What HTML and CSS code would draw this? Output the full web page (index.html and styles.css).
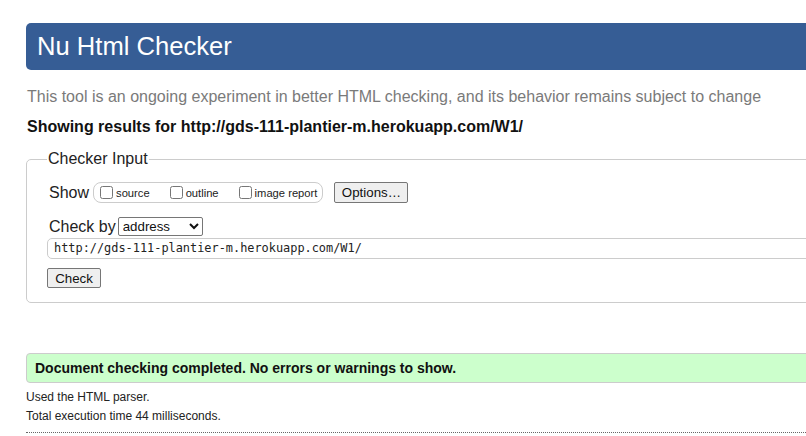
FILE: index.html
```html
<!DOCTYPE html>
<html>
<head>
<meta charset="utf-8">
<link rel="stylesheet" href="styles.css">
</head>
<body>
<div class="page">
  <h1 class="title">Nu Html Checker</h1>
  <p class="intro">This tool is an ongoing experiment in better HTML checking, and its behavior remains subject to change</p>
  <p class="showing">Showing results for http://gds-111-plantier-m.herokuapp.com/W1/</p>
  <fieldset class="input-box">
    <legend class="legend">Checker Input</legend>
    <div class="row show-row">
      <span class="row-label show-label">Show</span>
      <span class="opts">
        <label class="opt"><input type="checkbox" class="cb">source</label>
        <label class="opt"><input type="checkbox" class="cb">outline</label>
        <label class="opt"><input type="checkbox" class="cb">image report</label>
      </span>
      <button class="btn btn-options">Options…</button>
    </div>
    <div class="row checkby-row">
      <span class="row-label">Check by</span>
      <select class="sel"><option>address</option></select>
    </div>
    <div class="url">http://gds-111-plantier-m.herokuapp.com/W1/</div>
    <div class="row">
      <button class="btn btn-check">Check</button>
    </div>
  </fieldset>
  <div class="success">Document checking completed. No errors or warnings to show.</div>
  <p class="meta first">Used the HTML parser.</p>
  <p class="meta">Total execution time 44 milliseconds.</p>
  <div class="dotted"></div>
</div>
</body>
</html>
```
FILE: styles.css
```css
html, body {
  margin: 0;
  padding: 0;
  overflow: hidden;
  background: #fff;
}
body {
  font-family: "Liberation Sans", Arial, sans-serif;
  color: #222;
}
.page {
  width: 900px;
  padding: 23px 0 0 26px;
}
.title {
  margin: 0;
  height: 47px;
  box-sizing: border-box;
  background: #365d95;
  color: #fff;
  font-weight: normal;
  font-size: 25.6px;
  line-height: 47px;
  padding: 0 11px;
  border-radius: 5px;
}
.intro {
  margin: 17px 0 0 1px;
  font-size: 16px;
  line-height: 20px;
  color: #7a7a7a;
}
.showing {
  margin: 10px 0 0 1px;
  font-size: 16px;
  line-height: 20px;
  font-weight: bold;
  color: #111;
}
.input-box {
  margin: 13px 0 0 0;
  border: 1px solid #ccc;
  border-radius: 5px;
  padding: 14px 21px 14px 21px;
  min-inline-size: 0;
}
.legend {
  font-size: 16px;
  padding: 0 1px;
  color: #222;
  margin-left: -1px;
}
.row {
  display: flex;
  align-items: center;
}
.row-label {
  font-size: 16px;
  margin-left: 1px;
  margin-right: 3px;
}
.show-label {
  margin-right: 4px;
}
.show-row {
  height: 21px;
}
.opts {
  display: flex;
  align-items: center;
  border: 1px solid #ccc;
  border-radius: 8px;
  height: 19px;
  padding: 0 5px 0 6px;
  gap: 20px;
}
.opt {
  display: flex;
  align-items: center;
  font-size: 11.2px;
  color: #222;
}
.cb {
  margin: 0 3px 0 0;
  width: 13px;
  height: 13px;
}
.btn {
  font-family: "Liberation Sans", Arial, sans-serif;
  font-size: 13.3px;
  background: #efefef;
  border: 1px solid #767676;
  border-radius: 2px;
  color: #111;
  padding: 1px 6px;
}
.btn-options {
  margin-left: 11px;
  height: 21px;
  width: 74px;
}
.checkby-row {
  margin-top: 14px;
}
.sel {
  font-family: "Liberation Sans", Arial, sans-serif;
  font-size: 13.3px;
  width: 85px;
  height: 19px;
  margin-left: -1px;
  border: 1px solid #767676;
  border-radius: 2px;
  background: #fff;
  color: #111;
}
.url {
  margin: 2px -30px 0 -1px;
  height: 21px;
  box-sizing: border-box;
  border: 1px solid #ccc;
  border-radius: 5px 0 0 5px;
  font-family: "DejaVu Sans Mono", monospace;
  font-size: 11.9px;
  line-height: 19px;
  padding-left: 6px;
  color: #222;
}
.btn-check {
  margin-top: 9px;
  margin-left: -1px;
  height: 20px;
  width: 54px;
}
.success {
  margin-top: 50px;
  height: 30px;
  box-sizing: border-box;
  background: #ccffcc;
  border: 1px solid #ccc;
  border-radius: 4px 0 0 4px;
  font-weight: bold;
  font-size: 14px;
  line-height: 28px;
  padding-left: 8px;
  color: #111;
}
.meta {
  margin: 0;
  font-size: 12px;
  line-height: 19px;
  color: #222;
}
.meta.first {
  margin-top: 5px;
}
.dotted {
  margin-top: 6px;
  border-top: 1px dotted #666;
}
```
